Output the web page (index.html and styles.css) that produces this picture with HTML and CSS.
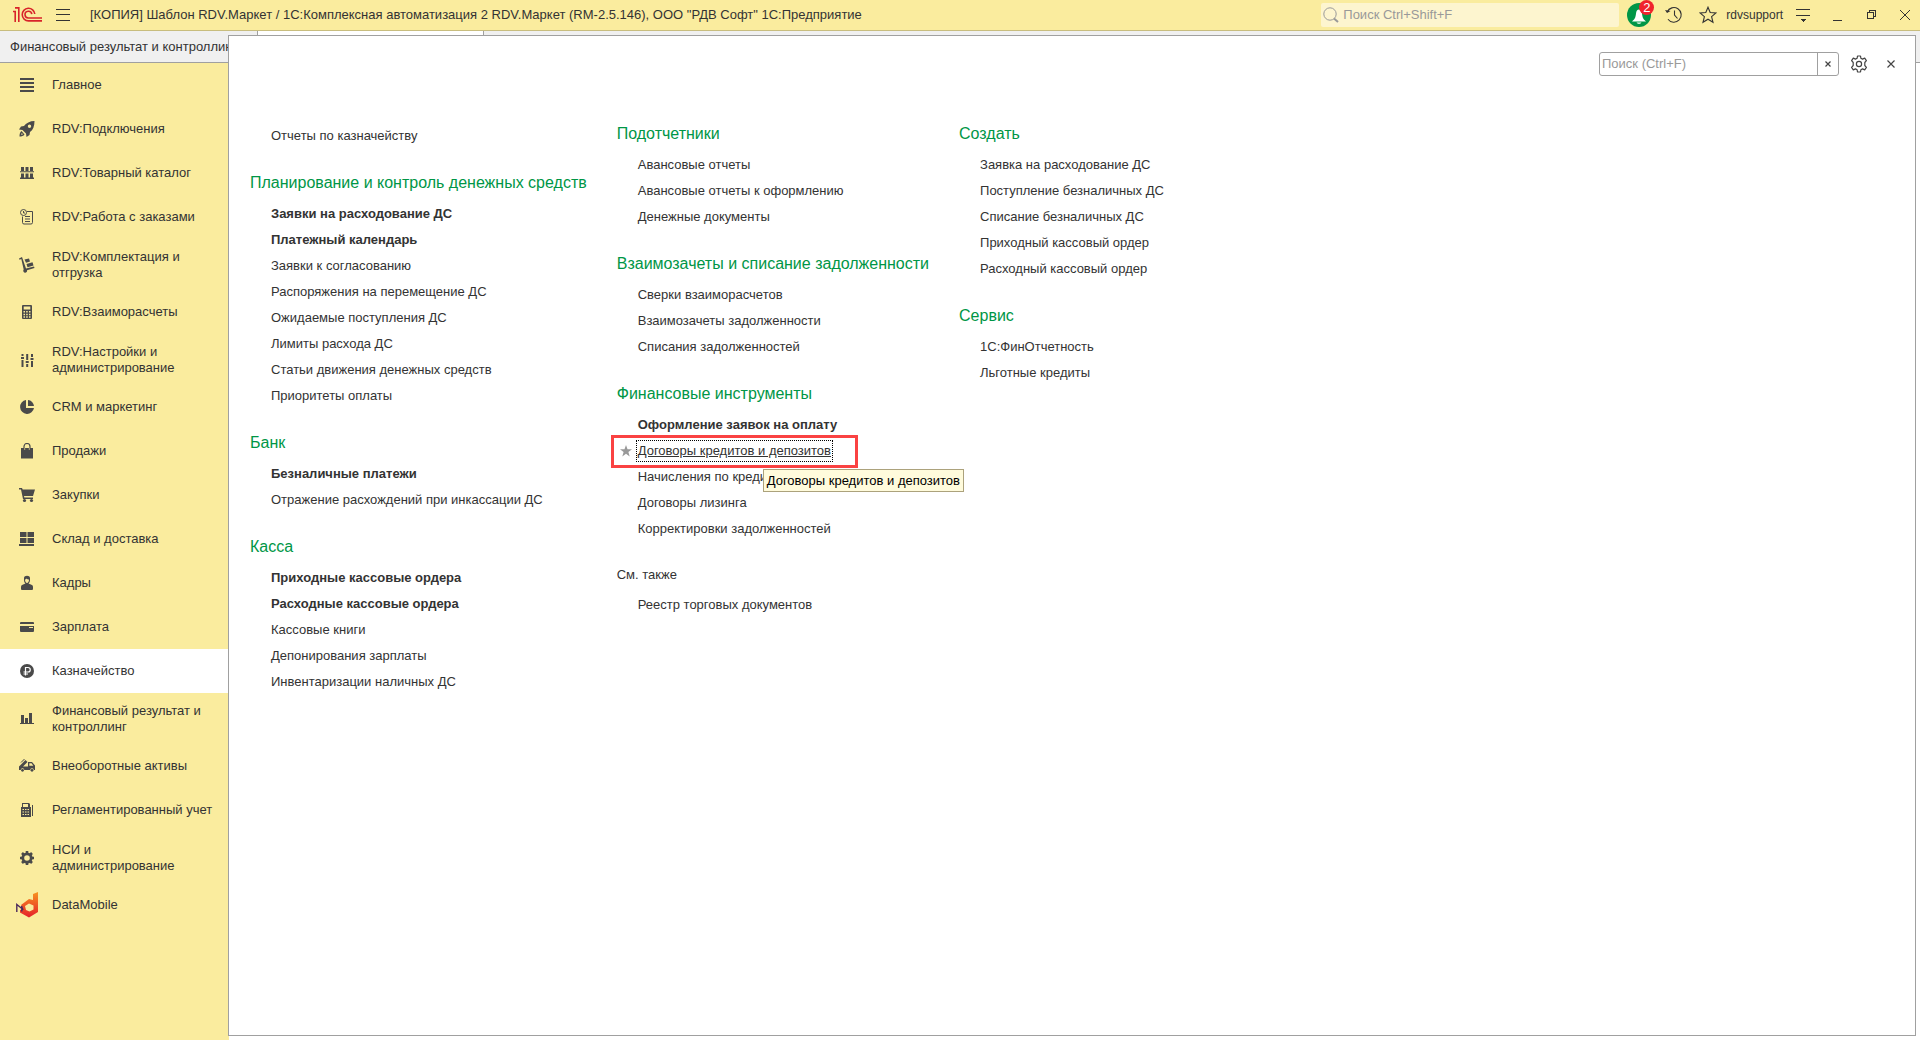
FILE: index.html
```html
<!DOCTYPE html>
<html lang="ru">
<head>
<meta charset="utf-8">
<title>1С:Предприятие</title>
<link rel="stylesheet" href="styles.css">
</head>
<body>
<div class="app">
  <header class="topbar">
    <svg class="logo" width="30" height="16" viewBox="0 0 30 16" fill="none" stroke="#d8232a" stroke-width="1.6" aria-label="1С">
      <path d="M0 4.5h2.2V15M2 .9h3.8V15M29 13.900H15.500A6.300 6.300 0 1 1 21.800 7M29 11H15.500A3.400 3.400 0 1 1 18.800 7.200"/>
    </svg>
    <button class="tool menu" aria-label="Меню"><svg width="14" height="12" viewBox="0 0 14 12" stroke="#333" shape-rendering="crispEdges"><path d="M0 .5h14M0 5.500h14M0 11.500h14"/></svg></button>
    <div class="title">[КОПИЯ] Шаблон RDV.Маркет / 1С:Комплексная автоматизация 2 RDV.Маркет (RM-2.5.146), ООО "РДВ Софт" 1С:Предприятие</div>
    <label class="global-search">
      <svg width="16" height="16" viewBox="0 0 16 16" fill="none" stroke="#999"><circle cx="7" cy="7" r="6.200"/><path d="M11 11.500l4 3.500" stroke-width="2"/></svg>
      <input type="text" placeholder="Поиск Ctrl+Shift+F" aria-label="Поиск">
    </label>
    <button class="tool bell" aria-label="Уведомления">
      <svg width="24" height="24" viewBox="0 0 24 24"><circle cx="12" cy="12" r="12" fill="#009646"/><path d="M5 18.500c3-2.500 3.500-4 4-8 .3-2.500 1.300-4 3-4s2.700 1.500 3 4c.5 4 1 5.500 4 8zM9.500 19.500h5c-1 1.800-4 1.800-5 0z" fill="#fff"/></svg>
      <span class="badge">2</span>
    </button>
    <button class="tool history" aria-label="История"><svg width="18" height="18" viewBox="0 0 18 18" fill="none" stroke="#333" stroke-width="1.100"><path d="M2.200 6A7.300 7.300 0 1 1 3 13.200M9.500 4.500V9l3 3.500"/><path d="M0 4l2 3 3.500-2z" fill="#333" stroke="none"/></svg></button>
    <button class="tool favorites" aria-label="Избранное"><svg width="18" height="18" viewBox="0 0 18 18" fill="none" stroke="#333" stroke-width="1.100"><path d="M9 1.200l2.200 5.300 5.800.4-4.400 3.700 1.400 5.700L9 13.200l-5 3.100 1.400-5.700L1 6.900l5.800-.4z"/></svg></button>
    <a class="user" href="#">rdvsupport</a>
    <button class="tool settings" aria-label="Настройки"><svg width="16" height="16" viewBox="0 0 16 16" shape-rendering="crispEdges"><path d="M1 2.500h14M1 8.500h14" stroke="#333"/><path d="M5 12h6l-3 3z" fill="#333"/></svg></button>
    <button class="tool minimize" aria-label="Свернуть"><svg width="10" height="12" viewBox="0 0 10 12"><path d="M0 11.500h9" stroke="#333"/></svg></button>
    <button class="tool restore" aria-label="Восстановить"><svg width="10" height="10" viewBox="0 0 10 10" fill="none" stroke="#333" shape-rendering="crispEdges"><path d="M.5 2.500h6v6h-6zM2.500 2.500v-2h6v6h-2"/></svg></button>
    <button class="tool close" aria-label="Закрыть"><svg width="12" height="12" viewBox="0 0 12 12" stroke="#333"><path d="M1 1l10 10M11 1L1 11"/></svg></button>
  </header>

  <div class="tabs">
    <a class="tab" href="#">Финансовый результат и контроллинг</a>
    <span class="tab tab-active"></span>
  </div>

  <div class="body">
    <nav class="sections">
      <a href="#"><svg class="ico" viewBox="0 0 16 16"><path d="M1 1h14v2H1zM1 5h14v2H1zM1 9h14v2H1zM1 13h14v2H1z"/></svg><span>Главное</span></a>
      <a href="#"><svg class="ico" viewBox="0 0 16 16"><path fill-rule="evenodd" d="M15.500 0C11 0 7 2 5 5L2 5.500 0 8.500l3.500.5 3.500 3.500.5 3.500 3-2 .5-3c3-2 4.500-6 4.500-11zM10.500 3.500a1.700 1.700 0 1 1 0 3.400 1.700 1.700 0 0 1 0-3.400zM2.500 10C1 11 .5 13 .5 15.500c2 0 4-.5 5-2zm.2 2l1.300 1.300-1.800.6z"/></svg><span>RDV:Подключения</span></a>
      <a href="#"><svg class="ico" viewBox="0 0 16 16"><path d="M2 2h3v4H2zM6.500 2h3v4h-3zM11 2h3v4h-3zM1 6.300h14v1H1zM2 8.500h3v4H2zM6.500 8.500h3v4h-3zM11 8.500h3v4h-3zM1 12.500h14V14H1z"/></svg><span>RDV:Товарный каталог</span></a>
      <a href="#"><svg class="ico" viewBox="0 0 16 16" fill="none" stroke="#4a4a4a"><circle cx="4.500" cy="3.500" r="3"/><path d="M4.500 2v2H6M8 2.500h5.500v11q0 1.500-1.500 1.500H5q-1.500 0-1.500-1.500v-6M6 7.500h5M6 10h5M6 12.500h5"/></svg><span>RDV:Работа с заказами</span></a>
      <a class="two" href="#"><svg class="ico" viewBox="0 0 16 16"><path d="M0 1.500L3 0l4 11.500 8-2 .5 1.500-7.500 2.200a1.900 1.900 0 1 1-3.300-.6L2.300 2 .5 2.700zM5.500 2.500l4.500-1 1 3-4 1.300zM7.500 7l6-1.700 1 3.200-6 1.800z"/></svg><span>RDV:Комплектация и отгрузка</span></a>
      <a href="#"><svg class="ico" viewBox="0 0 16 16"><path fill-rule="evenodd" d="M4 1h8q1 0 1 1v12q0 1-1 1H4q-1 0-1-1V2q0-1 1-1zm.7 1.500v3h6.600v-3zM4.500 7v1.500H6V7zm2.700 0v1.500h1.500V7zM10 7v1.500h1.500V7zM4.500 9.700v1.500H6V9.700zm2.700 0v1.500h1.500V9.700zm2.800 0v1.500h1.500V9.700zm-5.500 2.600v1.500H6v-1.500zm2.700 0v1.500h1.500v-1.500zm2.800 0v1.500h1.500v-1.500z"/></svg><span>RDV:Взаиморасчеты</span></a>
      <a class="two" href="#"><svg class="ico" viewBox="0 0 16 16"><path d="M2.500 2h2v2h-2zM2 5h3v2H2zM2.500 8h2v7h-2zM7.200 2h2v6h-2zM6.700 9h3v2h-3zM7.200 12h2v3h-2zM12 2h2v3h-2zM11.500 6h3v2h-3zM12 9h2v6h-2z"/></svg><span>RDV:Настройки и администрирование</span></a>
      <a href="#"><svg class="ico" viewBox="0 0 16 16"><path d="M7 1a7 7 0 1 0 8 8H7zM9 1v6h6a6.500 6.500 0 0 0-6-6z"/></svg><span>CRM и маркетинг</span></a>
      <a href="#"><svg class="ico" viewBox="0 0 16 16"><path d="M2 5h12v10.500H2z"/><path d="M5 7V3.500a3 3 0 0 1 6 0V7" fill="none" stroke="#4a4a4a" stroke-width="1.200"/><path d="M5.700 5v2M10.300 5v2" stroke="#faec9e" stroke-width=".6"/></svg><span>Продажи</span></a>
      <a href="#"><svg class="ico" viewBox="0 0 16 16"><path d="M0 1h3l.7 1.500H16L14 9H5l.3 1.500H14V12H4L2 2.500H0z"/><circle cx="5.500" cy="13.500" r="1.600"/><circle cx="12.500" cy="13.500" r="1.600"/></svg><span>Закупки</span></a>
      <a href="#"><svg class="ico" viewBox="0 0 16 16"><path d="M1 1h6.500v5H1zM8.500 1H15v5H8.500zM1 7h6.500v5H1zM8.500 7H15v5H8.500zM0 13h15v2H0z"/></svg><span>Склад и доставка</span></a>
      <a href="#"><svg class="ico" viewBox="0 0 16 16"><path fill-rule="evenodd" d="M5 3c0-3 6-3 6 0v2c0 2-.8 3-1.500 3.500L13 10q1 .5 1 2v2q0 1-1 1H3q-1 0-1-1v-2q0-1.500 1-2l3.500-1.500C5.800 8 5 7 5 5zm1 1.500C6 6.500 7 8 8 8s2-1.500 2-3.500c-1 0-2-.3-2.500-1-.3.600-.8 1-1.500 1z"/></svg><span>Кадры</span></a>
      <a href="#"><svg class="ico" viewBox="0 0 16 16"><path fill-rule="evenodd" d="M2 3h12q1 0 1 1v1H1V4q0-1 1-1zM1 7h14v5q0 1-1 1H2q-1 0-1-1zm9 1v1h4V8z"/></svg><span>Зарплата</span></a>
      <a class="selected" href="#"><svg class="ico" viewBox="0 0 16 16"><circle cx="8" cy="8" r="7"/><path d="M6.500 12.500v-8H9a2.200 2.200 0 0 1 0 4.500H4.500M4.500 11H9" fill="none" stroke="#fff" stroke-width="1.200"/></svg><span>Казначейство</span></a>
      <a class="two" href="#"><svg class="ico" viewBox="0 0 16 16"><path d="M2 4h3v8H2zM6 7h3v5H6zM10 2h3v10h-3zM1 12h14v1H1z"/></svg><span>Финансовый результат и контроллинг</span></a>
      <a href="#"><svg class="ico" viewBox="0 0 16 16"><path fill-rule="evenodd" d="M0 8.500L6.500 2l2 2L4 8.500h5V4h4l3 3.500V12h-1.200a1.800 1.800 0 0 0-3.600 0H5.300a1.800 1.800 0 0 0-3.600 0H0zM10.300 5.200v2.600h4L12.500 5.200z"/><path d="M2 4.500L5.500 1" stroke="#4a4a4a"/><circle cx="3.500" cy="12.300" r="1.400"/><circle cx="13" cy="12.300" r="1.400"/></svg><span>Внеоборотные активы</span></a>
      <a href="#"><svg class="ico" viewBox="0 0 16 16"><path fill-rule="evenodd" d="M3 1h7l1 1v3h1v10H2V5h1zm1 1v3h5V2zM3.500 7v1H5V7zM6 7v1h1.500V7zm2.500 0v1H10V7zm-5 2.500v1H5v-1zm2.500 0v1h1.500v-1zm2.500 0v1H10v-1zm-5 2.500v1H5v-1zM6 12v1h1.500v-1zm2.500 0v1H10v-1zM13 3h1v11h-1z"/></svg><span>Регламентированный учет</span></a>
      <a class="two" href="#"><svg class="ico" viewBox="0 0 16 16"><circle cx="8" cy="8" r="4.200" fill="none" stroke="#4a4a4a" stroke-width="2.800"/><path d="M8 1v3M8 12v3M1 8h3M12 8h3M3 3l2 2M11 11l2 2M13 3l-2 2M5 11l-2 2" stroke="#4a4a4a" stroke-width="2.600"/></svg><span>НСИ и администрирование</span></a>
      <a href="#"><svg class="ico ico-dm" viewBox="0 0 22 26"><defs><linearGradient id="dm" x2="0" y2="1"><stop offset="0" stop-color="#f79320"/><stop offset="1" stop-color="#e5202b"/></linearGradient></defs><path fill="url(#dm)" fill-rule="evenodd" d="M17 2l5-2v20l-9 5.500-9-5V18l3-1-2-4 8-6 4 1zm-4 9.500l-4 2.500 1 4 3.500 1.500 4-2v-4z"/><path d="M.8 20v-7.500l5 4v3M5.500 14l1.500 4" fill="none" stroke="#4b2a5c" stroke-width="1.400"/></svg><span>DataMobile</span></a>
    </nav>
    <div class="workspace"></div>
  </div>

  <main class="panel">
    <div class="panel-tools">
      <div class="find"><input type="text" placeholder="Поиск (Ctrl+F)" aria-label="Поиск в разделе"><button aria-label="Очистить"><svg width="6" height="6" viewBox="0 0 6 6" stroke="#444" stroke-width="1.200"><path d="M.5.5l5 5M5.500.5l-5 5"/></svg></button></div>
      <button class="tool gear" aria-label="Настройка навигации"><svg width="18" height="18" viewBox="0 0 18 18" fill="none" stroke="#444" stroke-width="1.200" stroke-linejoin="round"><path d="M7.500 1h3l.4 2.300 1.600.8 2.200-1 1.700 2.600L14.800 7.500v3l1.600 1.800-1.700 2.600-2.200-1-1.600.8-.4 2.300h-3l-.4-2.300-1.600-.8-2.200 1-1.700-2.600 1.600-1.800v-3L1.600 5.700l1.700-2.600 2.200 1 1.600-.8z"/><circle cx="9" cy="9" r="2.600"/></svg></button>
      <button class="tool panel-close" aria-label="Закрыть раздел"><svg width="8" height="8" viewBox="0 0 8 8" stroke="#444" stroke-width="1.200"><path d="M.5.5l7 7M7.500.5l-7 7"/></svg></button>
    </div>
    <div class="columns">
      <div class="column column-first">
        <section><ul>
          <li><a href="#">Отчеты по казначейству</a></li>
        </ul></section>
        <section><h2>Планирование и контроль денежных средств</h2><ul>
          <li><a class="main" href="#">Заявки на расходование ДС</a></li>
          <li><a class="main" href="#">Платежный календарь</a></li>
          <li><a href="#">Заявки к согласованию</a></li>
          <li><a href="#">Распоряжения на перемещение ДС</a></li>
          <li><a href="#">Ожидаемые поступления ДС</a></li>
          <li><a href="#">Лимиты расхода ДС</a></li>
          <li><a href="#">Статьи движения денежных средств</a></li>
          <li><a href="#">Приоритеты оплаты</a></li>
        </ul></section>
        <section><h2>Банк</h2><ul>
          <li><a class="main" href="#">Безналичные платежи</a></li>
          <li><a href="#">Отражение расхождений при инкассации ДС</a></li>
        </ul></section>
        <section><h2>Касса</h2><ul>
          <li><a class="main" href="#">Приходные кассовые ордера</a></li>
          <li><a class="main" href="#">Расходные кассовые ордера</a></li>
          <li><a href="#">Кассовые книги</a></li>
          <li><a href="#">Депонирования зарплаты</a></li>
          <li><a href="#">Инвентаризации наличных ДС</a></li>
        </ul></section>
      </div>
      <div class="column">
        <section><h2>Подотчетники</h2><ul>
          <li><a href="#">Авансовые отчеты</a></li>
          <li><a href="#">Авансовые отчеты к оформлению</a></li>
          <li><a href="#">Денежные документы</a></li>
        </ul></section>
        <section><h2>Взаимозачеты и списание задолженности</h2><ul>
          <li><a href="#">Сверки взаиморасчетов</a></li>
          <li><a href="#">Взаимозачеты задолженности</a></li>
          <li><a href="#">Списания задолженностей</a></li>
        </ul></section>
        <section><h2>Финансовые инструменты</h2><ul>
          <li><a class="main" href="#">Оформление заявок на оплату</a></li>
          <li class="current"><a href="#">Договоры кредитов и депозитов</a>
            <span class="highlight"></span>
            <svg class="star" width="12" height="12" viewBox="0 0 12 12"><path fill="#999" d="M6 0l1.500 4.200H12L8.400 6.900 9.700 11.500 6 8.700 2.300 11.500l1.300-4.600L0 4.200h4.500z"/></svg>
            <span class="tooltip" role="tooltip">Договоры кредитов и депозитов</span>
          </li>
          <li><a href="#">Начисления по кредитам</a></li>
          <li><a href="#">Договоры лизинга</a></li>
          <li><a href="#">Корректировки задолженностей</a></li>
        </ul></section>
        <section><h2 class="also">См. также</h2><ul>
          <li><a href="#">Реестр торговых документов</a></li>
        </ul></section>
      </div>
      <div class="column">
        <section><h2>Создать</h2><ul>
          <li><a href="#">Заявка на расходование ДС</a></li>
          <li><a href="#">Поступление безналичных ДС</a></li>
          <li><a href="#">Списание безналичных ДС</a></li>
          <li><a href="#">Приходный кассовый ордер</a></li>
          <li><a href="#">Расходный кассовый ордер</a></li>
        </ul></section>
        <section><h2>Сервис</h2><ul>
          <li><a href="#">1С:ФинОтчетность</a></li>
          <li><a href="#">Льготные кредиты</a></li>
        </ul></section>
      </div>
    </div>
  </main>
</div>
</body>
</html>
```

FILE: styles.css
```css
* { box-sizing: border-box; }
body {
  margin: 0;
  font: 13px/16px "Liberation Sans", Arial, sans-serif;
  color: #333;
  background: #fff;
}
a { color: inherit; text-decoration: none; }
button, input { font: inherit; color: inherit; border: 0; padding: 0; background: none; }
svg { display: block; flex: none; }
input::placeholder { color: #999; opacity: 1; }

.app { position: relative; min-height: 100vh; display: flex; flex-direction: column; }

.topbar {
  display: flex;
  align-items: center;
  height: 31px;
  padding: 0 9px 0 13px;
  background: #faec9e;
  border-bottom: 1px solid #c8bd7e;
}
.tool { display: flex; align-items: center; justify-content: center; flex: none; }
.menu { margin-left: 13px; }
.title { flex: 1; margin-left: 20px; white-space: nowrap; overflow: hidden; }
.global-search {
  display: flex;
  align-items: center;
  gap: 4px;
  width: 298px;
  height: 24px;
  padding-left: 2px;
  background: #fdf5cf;
  border-radius: 2px;
}
.global-search input { flex: 1; min-width: 0; outline: 0; }
.bell { position: relative; margin-left: 8px; }
.badge {
  position: absolute;
  top: -3px;
  right: -3px;
  width: 15px;
  height: 15px;
  border-radius: 50%;
  background: #f0232d;
  color: #fff;
  font-size: 13px;
  line-height: 15px;
  text-align: center;
}
.history { margin-left: 14px; }
.favorites { margin-left: 16px; }
.user { margin-left: 9px; font-size: 12px; }
.settings { margin-left: 12px; }
.minimize { margin-left: 22px; }
.restore { margin-left: 24px; }
.close { margin-left: 22px; }

.tabs {
  display: flex;
  height: 32px;
  background: #f0f0f0;
  border-bottom: 1px solid #a0a0a0;
}
.tab { width: 258px; padding: 0 10px; line-height: 31px; white-space: nowrap; overflow: hidden; border-right: 1px solid #a0a0a0; }
.tab-active { width: 226px; background: #fff; }

.body { flex: 1; display: flex; }
.sections { width: 229px; background: #faec9e; }
.sections a {
  display: flex;
  align-items: center;
  gap: 17px;
  height: 44px;
  padding: 0 16px 0 19px;
}
.sections .two { height: 51px; }
.sections .selected { background: #fff; }
.ico { width: 16px; height: 16px; fill: #4a4a4a; }
.ico[fill="none"] { fill: none; }
.ico-dm { width: 22px; height: 26px; margin: 0 -3px; }
.workspace { flex: 1; background: #fff; }

.panel {
  position: absolute;
  top: 35px;
  left: 228px;
  right: 4px;
  bottom: 4px;
  background: #fff;
  border: 1px solid #a0a0a0;
}
.panel-tools {
  display: flex;
  align-items: center;
  justify-content: flex-end;
  height: 56px;
  padding-right: 20px;
}
.find {
  display: flex;
  width: 240px;
  height: 24px;
  border: 1px solid #a0a0a0;
  border-radius: 3px;
}
.find input { flex: 1; min-width: 0; padding-left: 2px; outline: 0; }
.find button { display: flex; align-items: center; justify-content: center; width: 21px; border-left: 1px solid #a0a0a0; }
.gear { margin-left: 11px; }
.panel-close { margin-left: 19px; }

.columns {
  display: flex;
  gap: 30px;
  padding: 29px 21px 0;
}
.column-first { padding-top: 2px; }
section { margin-bottom: 21px; }
h2 {
  margin: 0 0 5px;
  font-size: 16px;
  font-weight: 400;
  line-height: 26px;
  color: #009646;
  white-space: nowrap;
}
h2.also { font-size: 13px; line-height: 24px; color: #333; }
ul { margin: 0; padding: 0 0 0 21px; list-style: none; }
li { position: relative; line-height: 26px; white-space: nowrap; }
.main { font-weight: 700; }
.current { display: flow-root; z-index: 1; width: max-content; }
.current a { display: block; line-height: 18px; margin: 4px 0; text-decoration: underline; outline: 1px dotted #000; outline-offset: 1px; }
.highlight { position: absolute; top: -3px; left: -27px; right: -27px; height: 33px; border: 3px solid #fa4242; pointer-events: none; }
.star { position: absolute; top: 7px; left: -18px; }
.tooltip {
  position: absolute;
  top: 31px;
  left: 125px;
  padding: 0 3px;
  line-height: 21px;
  color: #000;
  background: #fffbdc;
  border: 1px solid #aca27c;
}
```
